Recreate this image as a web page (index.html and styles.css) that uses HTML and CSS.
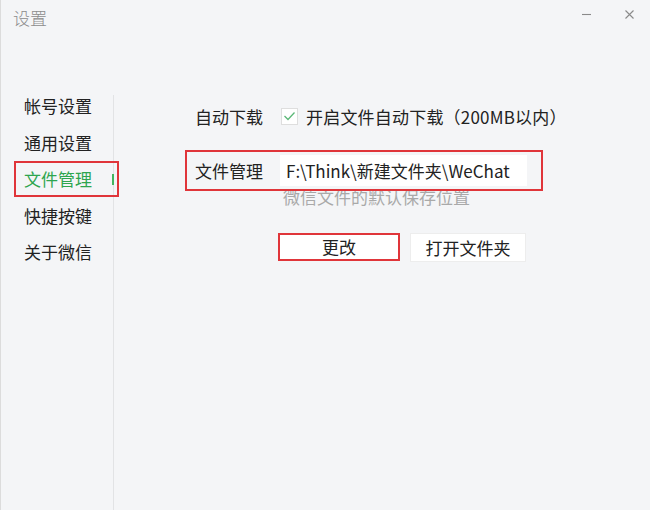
FILE: index.html
```html
<!DOCTYPE html>
<html lang="zh">
<head>
<meta charset="utf-8">
<title>设置</title>
<link rel="stylesheet" href="styles.css">
</head>
<body>
<div class="window">
  <header class="titlebar">
    <span class="title">设置</span>
    <div class="controls">
      <span class="ctl min"><svg width="11" height="11" viewBox="0 0 11 11"><path d="M1 5.5h9" stroke="#8a8a8a" stroke-width="1.1"/></svg></span>
      <span class="ctl close"><svg width="9" height="9" viewBox="0 0 9 9"><path d="M0.5 0.5l8 8M8.5 0.5l-8 8" stroke="#8a8a8a" stroke-width="1.1"/></svg></span>
    </div>
  </header>
  <div class="body">
    <nav class="sidebar">
      <div class="nav-item">帐号设置</div>
      <div class="nav-item">通用设置</div>
      <div class="nav-item active">文件管理</div>
      <div class="nav-item">快捷按键</div>
      <div class="nav-item">关于微信</div>
    </nav>
    <div class="divider"></div>
    <main class="content">
      <div class="row auto">
        <span class="label">自动下载</span>
        <span class="checkbox"><svg width="13" height="10" viewBox="0 0 13 10"><path d="M1.5 5l3.5 3.5 6.5-7" fill="none" stroke="#5cb878" stroke-width="1.3"/></svg></span>
        <span class="check-text">开启文件自动下载（200MB以内）</span>
      </div>
      <div class="row path-box">
        <span class="label">文件管理</span>
        <span class="path-input">F:\Think\新建文件夹\WeChat</span>
      </div>
      <div class="hint">微信文件的默认保存位置</div>
      <div class="buttons">
        <button class="btn change">更改</button>
        <button class="btn open">打开文件夹</button>
      </div>
    </main>
  </div>
</div>
</body>
</html>
```

FILE: styles.css
```css
html, body {
  margin: 0;
  padding: 0;
}
body {
  width: 650px;
  height: 510px;
  overflow: hidden;
  background: #f4f5f7;
  font-family: "Noto Sans CJK SC", "Noto Sans", sans-serif;
  color: #222;
}
.window {
  height: 510px;
  border-left: 1px solid #dcdcdc;
  box-sizing: border-box;
  display: flex;
  flex-direction: column;
}
.titlebar {
  height: 40px;
  display: flex;
  align-items: flex-start;
  justify-content: space-between;
}
.title {
  margin: 5px 0 0 12px;
  font-size: 17px;
  line-height: 26px;
  color: #8c8c8c;
  font-weight: 300;
}
.controls {
  display: flex;
  margin-top: 9px;
  margin-right: 16px;
  gap: 33px;
  align-items: center;
}
.ctl {
  display: flex;
  align-items: center;
  justify-content: center;
  height: 11px;
}
.body {
  flex: 1;
  display: flex;
}
.sidebar {
  width: 112px;
  padding-top: 48px;
  display: flex;
  flex-direction: column;
}
.nav-item {
  position: relative;
  height: 36.6px;
  line-height: 36.6px;
  padding-left: 23px;
  font-size: 17px;
  color: #222;
  white-space: nowrap;
}
.nav-item.active {
  color: #2ea54f;
}
.nav-item.active::before {
  content: "";
  position: absolute;
  left: 111px;
  top: 13px;
  width: 2px;
  height: 11px;
  background: #43b55f;
  z-index: 2;
}
.nav-item.active::after {
  content: "";
  position: absolute;
  left: 13px;
  top: 0;
  width: 101px;
  height: 32px;
  border: 2px solid #e0353a;
  z-index: 3;
}
.divider {
  width: 1px;
  margin-top: 55px;
  background: #e2e3e5;
}
.content {
  flex: 1;
  padding-left: 81px;
  padding-top: 64px;
  display: flex;
  flex-direction: column;
  align-items: flex-start;
}
.row {
  display: flex;
  align-items: center;
  font-size: 17px;
}
.auto {
  height: 24px;
}
.label {
  width: 85px;
  flex: none;
  white-space: nowrap;
}
.auto .label {
  width: 86px;
}
.checkbox {
  width: 15px;
  height: 15px;
  border: 1px solid #dedede;
  background: #fff;
  display: flex;
  align-items: center;
  justify-content: center;
  margin-right: 8px;
}
.check-text {
  white-space: nowrap;
  letter-spacing: 0.2px;
}
.path-box {
  position: relative;
  z-index: 1;
  margin-top: 22px;
  margin-left: -10px;
  padding: 3px 14px 3px 8px;
  border: 2px solid #e0353a;
}
.path-input {
  width: 241px;
  height: 31px;
  line-height: 31px;
  padding-left: 6px;
  background: #fff;
  white-space: nowrap;
  overflow: hidden;
}
.hint {
  margin-top: -5px;
  padding-left: 88px;
  font-size: 17px;
  line-height: 22px;
  color: #a9a9a9;
  white-space: nowrap;
}
.buttons {
  display: flex;
  align-items: center;
  margin-top: 23px;
  margin-left: 83px;
}
.btn {
  font-family: "Noto Sans CJK SC", "Noto Sans", sans-serif;
  font-size: 17px;
  color: #222;
  background: #fff;
  padding: 0;
  margin: 0;
  box-sizing: border-box;
  display: flex;
  align-items: center;
  justify-content: center;
}
.btn.change {
  width: 122px;
  height: 28px;
  border: 2px solid #e0353a;
}
.btn.open {
  width: 116px;
  height: 29px;
  margin-left: 10px;
  margin-top: 2px;
  border: 1px solid #ededed;
}
```
